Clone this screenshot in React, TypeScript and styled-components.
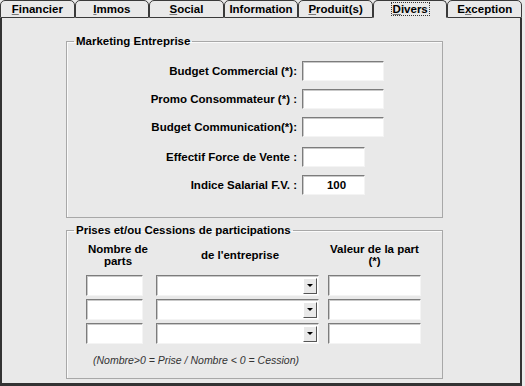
import React from 'react';
import styled, { createGlobalStyle } from 'styled-components';

const Global = createGlobalStyle`
  html, body { margin: 0; padding: 0; background: #e9e9e9; }
  body { width: 525px; height: 386px; overflow: hidden; font-family: "Liberation Sans", Arial, sans-serif; }
`;

const Window = styled.div`
  width: 522px;
  height: 386px;
  display: flex;
  flex-direction: column;
  background: #e9e9e9;
`;

const TabBar = styled.div`
  display: flex;
  height: 18px;
  flex: none;
`;

const Tab = styled.div<{ $active?: boolean }>`
  flex: 1 1 0;
  box-sizing: border-box;
  height: 18px;
  border: 1px solid #3a3a3a;
  border-bottom: ${p => (p.$active ? '1px solid #e9e9e9' : '1px solid #3a3a3a')};
  border-radius: 5px 5px 0 0;
  display: flex;
  align-items: center;
  justify-content: center;
  font: bold 11.5px "Liberation Sans", Arial, sans-serif;
  color: #000;
  background: #e9e9e9;
`;

const Focus = styled.span`
  outline: 1px dotted #333;
  outline-offset: 0px;
  padding: 0 1px;
`;

const Key = styled.span`
  text-decoration: underline;
  text-decoration-color: #777;
`;

const Panel = styled.div`
  flex: 1;
  box-sizing: border-box;
  border-left: 2px solid #333;
  border-right: 2px solid #333;
  border-bottom: 3px solid #333;
  padding: 16px 0 0 64px;
  display: flex;
  flex-direction: column;
  gap: 5px;
`;

const Group = styled.fieldset<{ $h: number }>`
  margin: 0;
  width: 377px;
  height: ${p => p.$h}px;
  box-sizing: border-box;
  border: 1px solid #a8a8a8;
  box-shadow: 1px 1px 0 #fafafa inset;
  padding: 0;
  min-width: 0;
`;

const Legend = styled.legend`
  margin-left: 7px;
  padding: 0 2px;
  font: bold 11.5px/14px "Liberation Sans", Arial, sans-serif;
  color: #000;
`;

const FieldList = styled.div`
  display: flex;
  flex-direction: column;
  gap: 8px;
  padding-top: 13px;
`;

const FieldRow = styled.div<{ $extra?: number }>`
  display: flex;
  align-items: center;
  gap: 5px;
  margin-top: ${p => p.$extra ?? 0}px;
`;

const Label = styled.div`
  width: 230px;
  text-align: right;
  font: bold 11.5px "Liberation Sans", Arial, sans-serif;
  color: #000;
  white-space: nowrap;
`;

const TextBox = styled.div<{ $w: number; $h?: number }>`
  width: ${p => p.$w}px;
  height: ${p => p.$h ?? 20}px;
  box-sizing: border-box;
  background: #fff;
  border-top: 1px solid #7c7c7c;
  border-left: 1px solid #7c7c7c;
  border-right: 1px solid #f4f4f4;
  border-bottom: 1px solid #f4f4f4;
  box-shadow: inset 1px 1px 0 #c9c9c9;
  display: flex;
  align-items: center;
  justify-content: center;
  padding-left: 6px;
  font: bold 11.5px "Liberation Sans", Arial, sans-serif;
  color: #000;
`;

const Table = styled.div`
  display: grid;
  grid-template-columns: 70px 172px 93px;
  row-gap: 3px;
  justify-items: start;
  padding: 6px 0 0 19px;
`;

const Header = styled.div<{ $w: number }>`
  width: ${p => p.$w}px;
  font: bold 11.5px/12px "Liberation Sans", Arial, sans-serif;
  color: #000;
  text-align: center;
  align-self: center;
  white-space: nowrap;
  margin-bottom: 5px;
`;

const Combo = styled.div`
  width: 163px;
  height: 21px;
  box-sizing: border-box;
  background: #fff;
  border-top: 1px solid #7c7c7c;
  border-left: 1px solid #7c7c7c;
  border-right: 1px solid #f4f4f4;
  border-bottom: 1px solid #f4f4f4;
  box-shadow: inset 1px 1px 0 #c9c9c9;
  display: flex;
  justify-content: flex-end;
  align-items: center;
  padding-right: 1px;
`;

const DropButton = styled.div`
  width: 14px;
  height: 16px;
  box-sizing: border-box;
  background: #e9e9e9;
  border-top: 1px solid #fff;
  border-left: 1px solid #fff;
  border-right: 1px solid #555;
  border-bottom: 1px solid #555;
  display: flex;
  align-items: center;
  justify-content: center;
`;

const Arrow = styled.div`
  width: 0;
  height: 0;
  border-left: 3px solid transparent;
  border-right: 3px solid transparent;
  border-top: 3px solid #000;
`;

const Note = styled.div`
  padding: 10px 0 0 26px;
  font: italic 10.5px/13px "Liberation Sans", Arial, sans-serif;
  color: #333;
`;

const fields: { label: string; w: number; extra?: number; value?: string }[] = [
  { label: 'Budget Commercial (*):', w: 82 },
  { label: 'Promo Consommateur (*) :', w: 82 },
  { label: 'Budget Communication(*):', w: 82 },
  { label: 'Effectif Force de Vente :', w: 63, extra: 2 },
  { label: 'Indice Salarial F.V. :', w: 63, value: '100' },
];

export default function App() {
  return (
    <>
      <Global />
      <Window>
        <TabBar>
          <Tab><span><Key>F</Key>inancier</span></Tab>
          <Tab><span><Key>I</Key>mmos</span></Tab>
          <Tab><span><Key>S</Key>ocial</span></Tab>
          <Tab><span>Information</span></Tab>
          <Tab><span><Key>P</Key>roduit(s)</span></Tab>
          <Tab $active><Focus><Key>D</Key>ivers</Focus></Tab>
          <Tab><span>E<Key>x</Key>ception</span></Tab>
        </TabBar>
        <Panel>
          <Group $h={184}>
            <Legend>Marketing Entreprise</Legend>
            <FieldList>
              {fields.map(f => (
                <FieldRow key={f.label} $extra={f.extra}>
                  <Label>{f.label}</Label>
                  <TextBox $w={f.w}>{f.value ?? ''}</TextBox>
                </FieldRow>
              ))}
            </FieldList>
          </Group>
          <Group $h={156}>
            <Legend>Prises et/ou Cessions de participations</Legend>
            <Table>
              <Header $w={64}>Nombre de<br />parts</Header>
              <Header $w={168}>de l'entreprise</Header>
              <Header $w={93}>Valeur de la part<br />(*)</Header>
              {[0, 1, 2].map(i => (
                <React.Fragment key={i}>
                  <TextBox $w={57} $h={21} />
                  <Combo><DropButton><Arrow /></DropButton></Combo>
                  <TextBox $w={93} $h={21} />
                </React.Fragment>
              ))}
            </Table>
            <Note>(Nombre&gt;0 = Prise / Nombre &lt; 0 = Cession)</Note>
          </Group>
        </Panel>
      </Window>
    </>
  );
}
